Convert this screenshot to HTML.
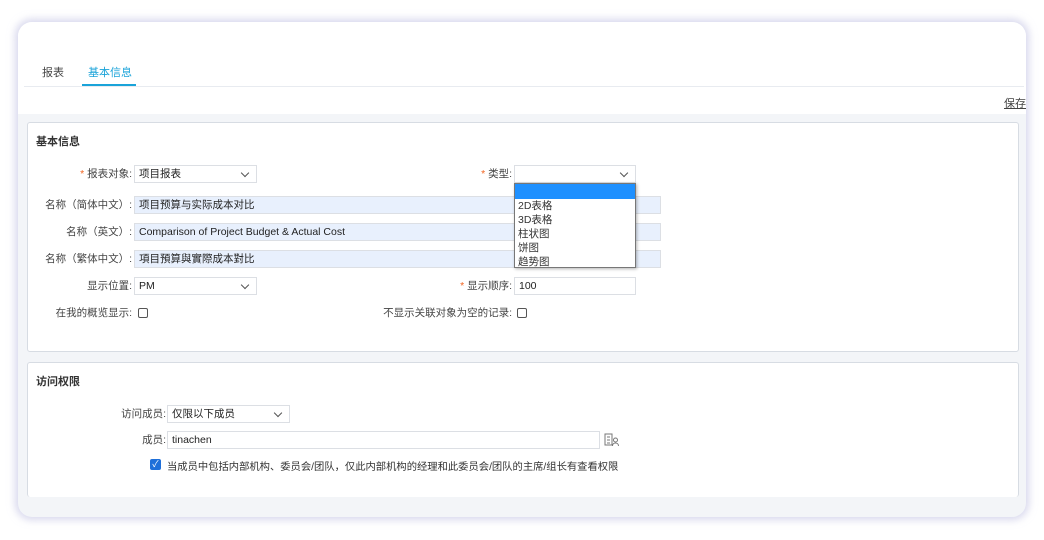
<!DOCTYPE html>
<html><head><meta charset="utf-8"><style>
*{box-sizing:border-box;margin:0;padding:0}
body{width:1044px;height:540px;background:#fff;font-family:"Liberation Sans","Noto Sans CJK SC",sans-serif;font-size:11px;color:#333;position:relative;overflow:hidden}
.card{position:absolute;left:18px;top:22px;width:1008px;height:495px;border-radius:14px;background:#f3f5f8;box-shadow:0 0 8px 3px rgba(190,190,225,.6);overflow:hidden}
.top{position:absolute;left:0;top:0;width:1008px;height:92px;background:#fff}
.tabline{position:absolute;left:6px;top:64px;width:1000px;height:1px;background:#e8ebf0}
.tab{position:absolute;top:42px;font-size:11px}
.ul{position:absolute;left:64px;top:62px;width:54px;height:2px;background:#1aa3d9}
.save{position:absolute;left:986px;top:73px;font-size:11px;text-decoration:underline;color:#444}
.sec{position:absolute;left:9px;width:992px;background:#fff;border:1px solid #d7dce3;border-radius:3px}
.h{position:absolute;left:8px;font-weight:bold;font-size:11px;color:#333}
.lbl{position:absolute;text-align:right;font-size:10.5px;color:#444;line-height:13px}
.lbl b{color:#f26522;font-weight:normal}
.in{position:absolute;height:18px;border:1px solid #dcdfe4;background:#fff;padding-left:4px;line-height:17px;font-size:10.5px;color:#222}
.blue{background:#e8f0fd}
.sel::after{content:"";position:absolute;right:8px;top:4px;width:5px;height:5px;border-right:1px solid #555;border-bottom:1px solid #555;transform:rotate(45deg)}
.cb{position:absolute;width:10px;height:10px;border:1px solid #555;border-radius:2px;background:#fff}
.dd{position:absolute;left:514px;top:183px;width:122px;height:85px;background:#fff;border:1px solid #777;box-shadow:1px 1px 3px rgba(0,0,0,.3);font-size:10.5px}
.dd div{height:14px;line-height:14px;padding-left:3px}
</style></head><body>
<div class="card">
<div class="top">
 <div class="tab" style="left:24px;color:#444">报表</div>
 <div class="tab" style="left:70px;color:#1aa3d9">基本信息</div>
 <div class="tabline"></div><div class="ul"></div>
 <div class="save">保存</div>
</div>
<div class="sec" style="top:100px;height:230px">
 <div class="h" style="top:10px">基本信息</div>
</div>
<div class="sec" style="top:340px;height:135px;border-bottom:none">
 <div class="h" style="top:10px">访问权限</div>
</div>
</div>
<div class="lbl" style="left:40px;top:168px;width:92px"><b>*</b> 报表对象:</div>
<div class="in sel" style="left:134px;top:165px;width:123px">项目报表</div>
<div class="lbl" style="left:400px;top:168px;width:112px"><b>*</b> 类型:</div>
<div class="in sel" style="left:514px;top:165px;width:122px"></div>
<div class="lbl" style="left:30px;top:199px;width:102px">名称（简体中文）:</div>
<div class="in blue" style="left:134px;top:196px;width:527px">项目预算与实际成本对比</div>
<div class="lbl" style="left:30px;top:226px;width:102px">名称（英文）:</div>
<div class="in blue" style="left:134px;top:223px;width:527px">Comparison of Project Budget &amp; Actual Cost</div>
<div class="lbl" style="left:30px;top:253px;width:102px">名称（繁体中文）:</div>
<div class="in blue" style="left:134px;top:250px;width:527px">項目預算與實際成本對比</div>
<div class="lbl" style="left:30px;top:280px;width:102px">显示位置:</div>
<div class="in sel" style="left:134px;top:277px;width:123px">PM</div>
<div class="lbl" style="left:400px;top:280px;width:112px"><b>*</b> 显示顺序:</div>
<div class="in" style="left:514px;top:277px;width:122px">100</div>
<div class="lbl" style="left:30px;top:307px;width:102px">在我的概览显示:</div>
<div class="cb" style="left:138px;top:308px"></div>
<div class="lbl" style="left:350px;top:307px;width:162px">不显示关联对象为空的记录:</div>
<div class="cb" style="left:517px;top:308px"></div>
<div class="dd"><div style="background:#1e90ff;height:15px"></div><div>2D表格</div><div>3D表格</div><div>柱状图</div><div>饼图</div><div>趋势图</div></div>

<div class="lbl" style="left:80px;top:408px;width:86px">访问成员:</div>
<div class="in sel" style="left:167px;top:405px;width:123px">仅限以下成员</div>
<div class="lbl" style="left:80px;top:434px;width:86px">成员:</div>
<div class="in" style="left:167px;top:431px;width:433px">tinachen</div>
<svg style="position:absolute;left:604px;top:433px" width="16" height="14" viewBox="0 0 16 14" fill="none" stroke="#777" stroke-width="1"><rect x="1" y="1" width="7" height="11"/><path d="M3 4h3M3 7h3M3 10h3"/><circle cx="11.5" cy="7" r="2"/><path d="M8.5 13c0-2 1.5-3 3-3s3 1 3 3"/></svg>
<div style="position:absolute;left:150px;top:459px;width:11px;height:11px;background:#1e6fd9;border-radius:2px;color:#fff;font-size:9px;line-height:11px;text-align:center">✓</div>
<div style="position:absolute;left:167px;top:458px;font-size:10.3px;color:#333">当成员中包括内部机构、委员会/团队，仅此内部机构的经理和此委员会/团队的主席/组长有查看权限</div>
</body></html>
